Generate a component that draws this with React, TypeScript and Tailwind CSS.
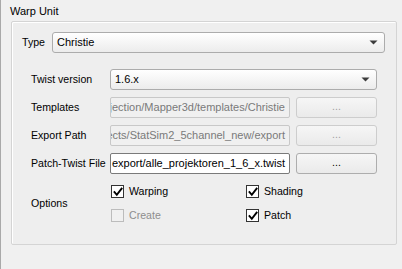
import React from "react";

const Arrow = () => (
  <svg width="9" height="5" viewBox="0 0 9 5" className="shrink-0">
    <path d="M0.5 0.5 H8.5 L4.5 4.5 Z" fill="#3c3c3c" />
  </svg>
);

const Check = ({ checked, disabled, label }: { checked: boolean; disabled?: boolean; label: string }) => (
  <div className="flex items-center h-[13px] gap-[5px]">
    <div
      className={
        "w-[13px] h-[13px] flex items-center justify-center border " +
        (disabled ? "border-[#bcbcbc] bg-[#f0f0f0]" : "border-[#333333] bg-white")
      }
    >
      {checked && (
        <svg width="10" height="10" viewBox="0 0 10 10">
          <path d="M1.5 5.2 L3.8 7.8 L8.6 1.6" stroke="#000" strokeWidth="1.9" fill="none" strokeLinecap="square" />
        </svg>
      )}
    </div>
    <span className={disabled ? "text-[#8d8d8d]" : "text-black"}>{label}</span>
  </div>
);

const Field = ({ text, disabled }: { text: string; disabled?: boolean }) => (
  <div
    className={
      "h-[21px] flex items-center justify-end overflow-hidden rounded-[2px] border pr-[4px] whitespace-nowrap text-[11px] " +
      (disabled ? "border-[#c8c8c8] bg-[#f0f0f0] text-[#7a7a7a]" : "border-[#7a7a7a] bg-white text-black")
    }
  >
    <span className="shrink-0">{text}</span>
  </div>
);

const Btn = ({ disabled }: { disabled?: boolean }) => (
  <div
    className={
      "h-[21px] flex items-center justify-center rounded-[3px] border bg-gradient-to-b from-[#f6f6f6] to-[#eaeaea] " +
      (disabled ? "border-[#cdcdcd] text-[#a0a0a0]" : "border-[#adadad] text-black")
    }
  >
    <span className="-mt-[2px]">...</span>
  </div>
);

export default function App() {
  return (
    <div className="w-[402px] h-[269px] bg-[#f0f0f0] font-['Liberation_Sans',Arial,sans-serif] text-[10.6px] leading-[13px] text-black border-l border-[#a9a9a9] overflow-hidden">
      <div className="pl-[9px] pt-[5px] h-[20px] text-[11px]">Warp Unit</div>
      <div className="ml-[10px] mt-[1px] w-[386px] h-[224px] border border-[#d4d4d4] rounded-[2px] shadow-[inset_1px_1px_0_#ffffff] bg-[#eeeeee]">
        <div className="flex items-center pl-[10px] pt-[10px] pr-[11px]">
          <span className="w-[30px]">Type</span>
          <div className="flex-1 h-[21px] flex items-center justify-between pl-[4px] pr-[6px] rounded-[3px] border border-[#acacac] bg-gradient-to-b from-[#ffffff] to-[#ececec] text-[11px]">
            <span>Christie</span>
            <Arrow />
          </div>
        </div>
        <div className="mt-[16px] pl-[19px] grid grid-cols-[73px_180px_81px] gap-x-[6px] gap-y-[7px] items-center">
          <span className="whitespace-nowrap">Twist version</span>
          <div className="col-span-2 h-[21px] flex items-center justify-between pl-[4px] pr-[6px] rounded-[3px] border border-[#acacac] bg-gradient-to-b from-[#ffffff] to-[#ececec] text-[11px]">
            <span>1.6.x</span>
            <Arrow />
          </div>
          <span className="whitespace-nowrap">Templates</span>
          <Field text="jection/Mapper3d/templates/Christie" disabled />
          <Btn disabled />
          <span className="whitespace-nowrap">Export Path</span>
          <Field text="ects/StatSim2_5channel_new/export" disabled />
          <Btn disabled />
          <span className="whitespace-nowrap">Patch-Twist File</span>
          <Field text="export/alle_projektoren_1_6_x.twist" />
          <Btn />
        </div>
        <div className="mt-[11px] pl-[19px] flex items-center">
          <span className="w-[80px]">Options</span>
          <div className="grid grid-cols-[135px_120px] gap-y-[11px]">
            <Check checked label="Warping" />
            <Check checked label="Shading" />
            <Check checked={false} disabled label="Create" />
            <Check checked label="Patch" />
          </div>
        </div>
      </div>
    </div>
  );
}
